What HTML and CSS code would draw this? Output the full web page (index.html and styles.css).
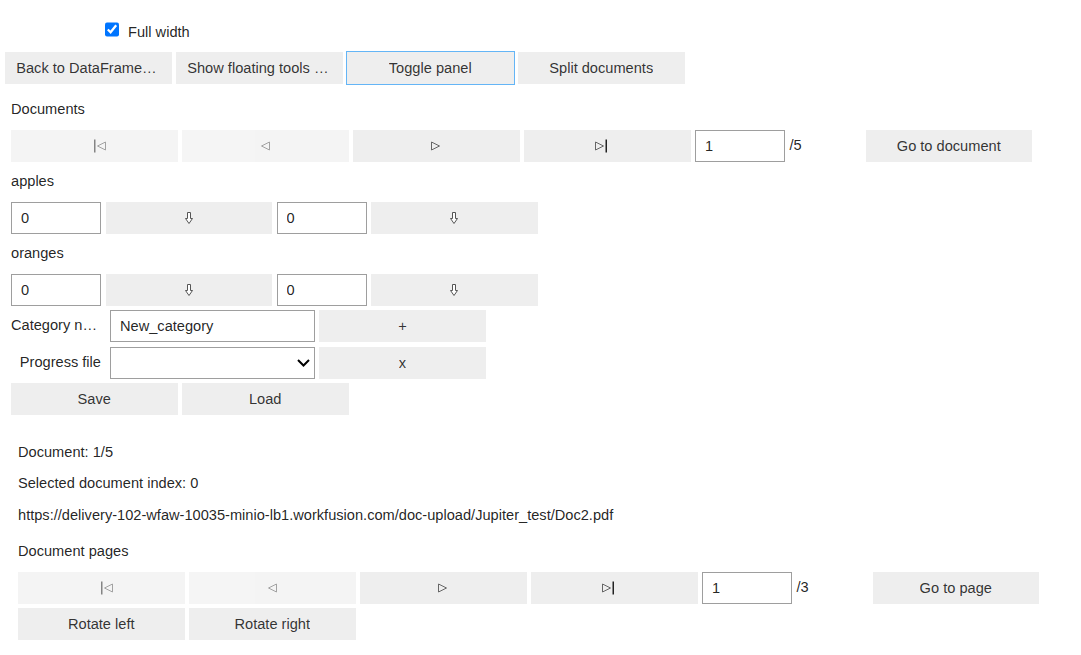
FILE: index.html
```html
<!DOCTYPE html>
<html lang="en">
<head>
    <meta charset="utf-8">
    <title>Document viewer</title>
    <link rel="stylesheet" href="styles.css">
</head>
<body>

    <!-- Toolbar -->
    <div class="top">
        <label class="check-row">
            <input type="checkbox" checked>
            <span>Full width</span>
        </label>
        <div class="row">
            <button class="btn"><span class="txt">Back to DataFrame view</span></button>
            <button class="btn"><span class="txt">Show floating tools panel</span></button>
            <button class="btn focused"><span class="txt">Toggle panel</span></button>
            <button class="btn"><span class="txt">Split documents</span></button>
        </div>
    </div>

    <!-- Documents, categories and progress -->
    <div class="panel">
        <div class="label">Documents</div>
        <div class="row">
            <button class="btn" disabled>
                <svg class="icon icon-first" width="12" height="14" viewBox="0 0 12 14"><rect x="0" y="0.5" width="1.5" height="13" fill="#333"/><polygon points="11.5,3 3.5,7 11.5,11" fill="none" stroke="#666"/></svg>
            </button>
            <button class="btn" disabled>
                <svg class="icon" width="10" height="14" viewBox="0 0 10 14"><polygon points="9.5,3 1.5,7 9.5,11" fill="none" stroke="#666"/></svg>
            </button>
            <button class="btn">
                <svg class="icon" width="10" height="14" viewBox="0 0 10 14"><polygon points="0.5,3 8.5,7 0.5,11" fill="none" stroke="#666"/></svg>
            </button>
            <button class="btn">
                <svg class="icon icon-last" width="12" height="14" viewBox="0 0 12 14"><polygon points="0.5,3 8.5,7 0.5,11" fill="none" stroke="#666"/><rect x="10.5" y="0.5" width="1.5" height="13" fill="#222"/></svg>
            </button>
            <input class="num" type="text" value="1">
            <div class="label count">/5</div>
            <button class="btn"><span class="txt">Go to document</span></button>
        </div>

        <div class="label">apples</div>
        <div class="row">
            <input class="num" type="text" value="0">
            <button class="btn">
                <svg class="icon" width="8" height="12" viewBox="0 0 8 12"><path d="M2.5 0.5H5.5V6.5H7.5L4 11.5L0.5 6.5H2.5Z" fill="#fff" stroke="#555"/></svg>
            </button>
            <input class="num" type="text" value="0">
            <button class="btn">
                <svg class="icon" width="8" height="12" viewBox="0 0 8 12"><path d="M2.5 0.5H5.5V6.5H7.5L4 11.5L0.5 6.5H2.5Z" fill="#fff" stroke="#555"/></svg>
            </button>
        </div>

        <div class="label">oranges</div>
        <div class="row">
            <input class="num" type="text" value="0">
            <button class="btn">
                <svg class="icon" width="8" height="12" viewBox="0 0 8 12"><path d="M2.5 0.5H5.5V6.5H7.5L4 11.5L0.5 6.5H2.5Z" fill="#fff" stroke="#555"/></svg>
            </button>
            <input class="num" type="text" value="0">
            <button class="btn">
                <svg class="icon" width="8" height="12" viewBox="0 0 8 12"><path d="M2.5 0.5H5.5V6.5H7.5L4 11.5L0.5 6.5H2.5Z" fill="#fff" stroke="#555"/></svg>
            </button>
        </div>

        <div class="row">
            <div class="field">
                <span class="desc">Category name</span>
                <input class="text" type="text" value="New_category">
            </div>
            <button class="btn"><span class="txt">+</span></button>
        </div>
        <div class="row progress">
            <div class="field">
                <span class="desc">Progress file</span>
                <div class="select-wrap">
                    <select class="select"><option></option></select>
                    <svg class="chevron" width="13" height="8" viewBox="0 0 13 8"><polyline points="1,1 6.5,6.5 12,1" fill="none" stroke="#000" stroke-width="2"/></svg>
                </div>
            </div>
            <button class="btn"><span class="txt">x</span></button>
        </div>
        <div class="row">
            <button class="btn"><span class="txt">Save</span></button>
            <button class="btn"><span class="txt">Load</span></button>
        </div>
    </div>

    <!-- Current document -->
    <div class="info">
        <div class="line">Document: 1/5</div>
        <div class="line">Selected document index: 0</div>
        <div class="line">https://delivery-102-wfaw-10035-minio-lb1.workfusion.com/doc-upload/Jupiter_test/Doc2.pdf</div>

        <div class="pages">
            <div class="label">Document pages</div>
            <div class="row">
                <button class="btn" disabled>
                    <svg class="icon icon-first" width="12" height="14" viewBox="0 0 12 14"><rect x="0" y="0.5" width="1.5" height="13" fill="#333"/><polygon points="11.5,3 3.5,7 11.5,11" fill="none" stroke="#666"/></svg>
                </button>
                <button class="btn" disabled>
                    <svg class="icon" width="10" height="14" viewBox="0 0 10 14"><polygon points="9.5,3 1.5,7 9.5,11" fill="none" stroke="#666"/></svg>
                </button>
                <button class="btn">
                    <svg class="icon" width="10" height="14" viewBox="0 0 10 14"><polygon points="0.5,3 8.5,7 0.5,11" fill="none" stroke="#666"/></svg>
                </button>
                <button class="btn">
                    <svg class="icon icon-last" width="12" height="14" viewBox="0 0 12 14"><polygon points="0.5,3 8.5,7 0.5,11" fill="none" stroke="#666"/><rect x="10.5" y="0.5" width="1.5" height="13" fill="#222"/></svg>
                </button>
                <input class="num" type="text" value="1">
                <div class="label count">/3</div>
                <button class="btn"><span class="txt">Go to page</span></button>
            </div>
            <div class="row">
                <button class="btn"><span class="txt">Rotate left</span></button>
                <button class="btn"><span class="txt">Rotate right</span></button>
            </div>
        </div>
    </div>

</body>
</html>
```

FILE: styles.css
```css
body {
    margin: 0;
    font-family: "Liberation Sans", Arial, sans-serif;
    font-size: 14.625px;
    color: rgba(0, 0, 0, 0.87);
    background-color: #fff;
}

/* toolbar */

.top {
    display: flex;
    flex-direction: column;
    gap: 4.5px;
    padding: 16px 0 0 5px;
}

.check-row {
    display: flex;
    align-items: center;
    gap: 9px;
    height: 31.5px;
    padding-left: 99.5px;
}

.check-row input {
    width: 14.5px;
    height: 14.5px;
    margin: 0 0 5px 0;
}

/* widget rows */

.panel {
    display: flex;
    flex-direction: column;
    gap: 4.5px;
    margin-top: 10.5px;
    padding-left: 11px;
}

.row {
    display: flex;
    align-items: center;
    gap: 4.5px;
}

.progress {
    margin-top: 1px;
}

.label {
    height: 31.5px;
    line-height: 31.5px;
    white-space: nowrap;
}

.count {
    flex: none;
    width: 71.5px;
}

.btn {
    flex: none;
    display: flex;
    align-items: center;
    justify-content: center;
    width: 166.5px;
    height: 31.5px;
    padding: 0 11.25px;
    border: none;
    border-radius: 0;
    background-color: #eeeeee;
    color: rgba(0, 0, 0, 0.8);
    font-family: inherit;
    font-size: 14.625px;
    cursor: pointer;
}

.btn:disabled {
    opacity: 0.6;
    cursor: default;
}

.btn.focused {
    outline: 1px solid #64b5f6;
}

.btn .txt {
    min-width: 0;
    overflow: hidden;
    text-overflow: ellipsis;
    white-space: nowrap;
}

.icon {
    flex: none;
    display: block;
}

.icon-first {
    margin-left: 12px;
}

.icon-last {
    margin-right: 12px;
}

/* inputs */

.num,
.text,
.select {
    box-sizing: border-box;
    height: 31.5px;
    padding: 0 9px;
    border: 1px solid #9e9e9e;
    border-radius: 0;
    background-color: #fff;
    color: rgba(0, 0, 0, 0.87);
    font-family: inherit;
    font-size: 14.625px;
    outline: none;
}

.num {
    flex: none;
    width: 90px;
}

.text {
    width: 204.75px;
}

.field {
    display: flex;
    align-items: center;
}

.desc {
    flex: none;
    width: 90px;
    margin-right: 9px;
    line-height: 31.5px;
    text-align: right;
    overflow: hidden;
    text-overflow: ellipsis;
    white-space: nowrap;
}

.select-wrap {
    position: relative;
    width: 204.75px;
    height: 31.5px;
}

.select {
    appearance: none;
    width: 100%;
}

.chevron {
    position: absolute;
    right: 5px;
    top: 11.75px;
    pointer-events: none;
}

/* document info */

.info {
    margin-top: 22px;
    padding-left: 18px;
}

.line {
    height: 31.5px;
    line-height: 31.5px;
    white-space: nowrap;
}

.pages {
    display: flex;
    flex-direction: column;
    gap: 4.5px;
    margin-top: 5px;
}
```
